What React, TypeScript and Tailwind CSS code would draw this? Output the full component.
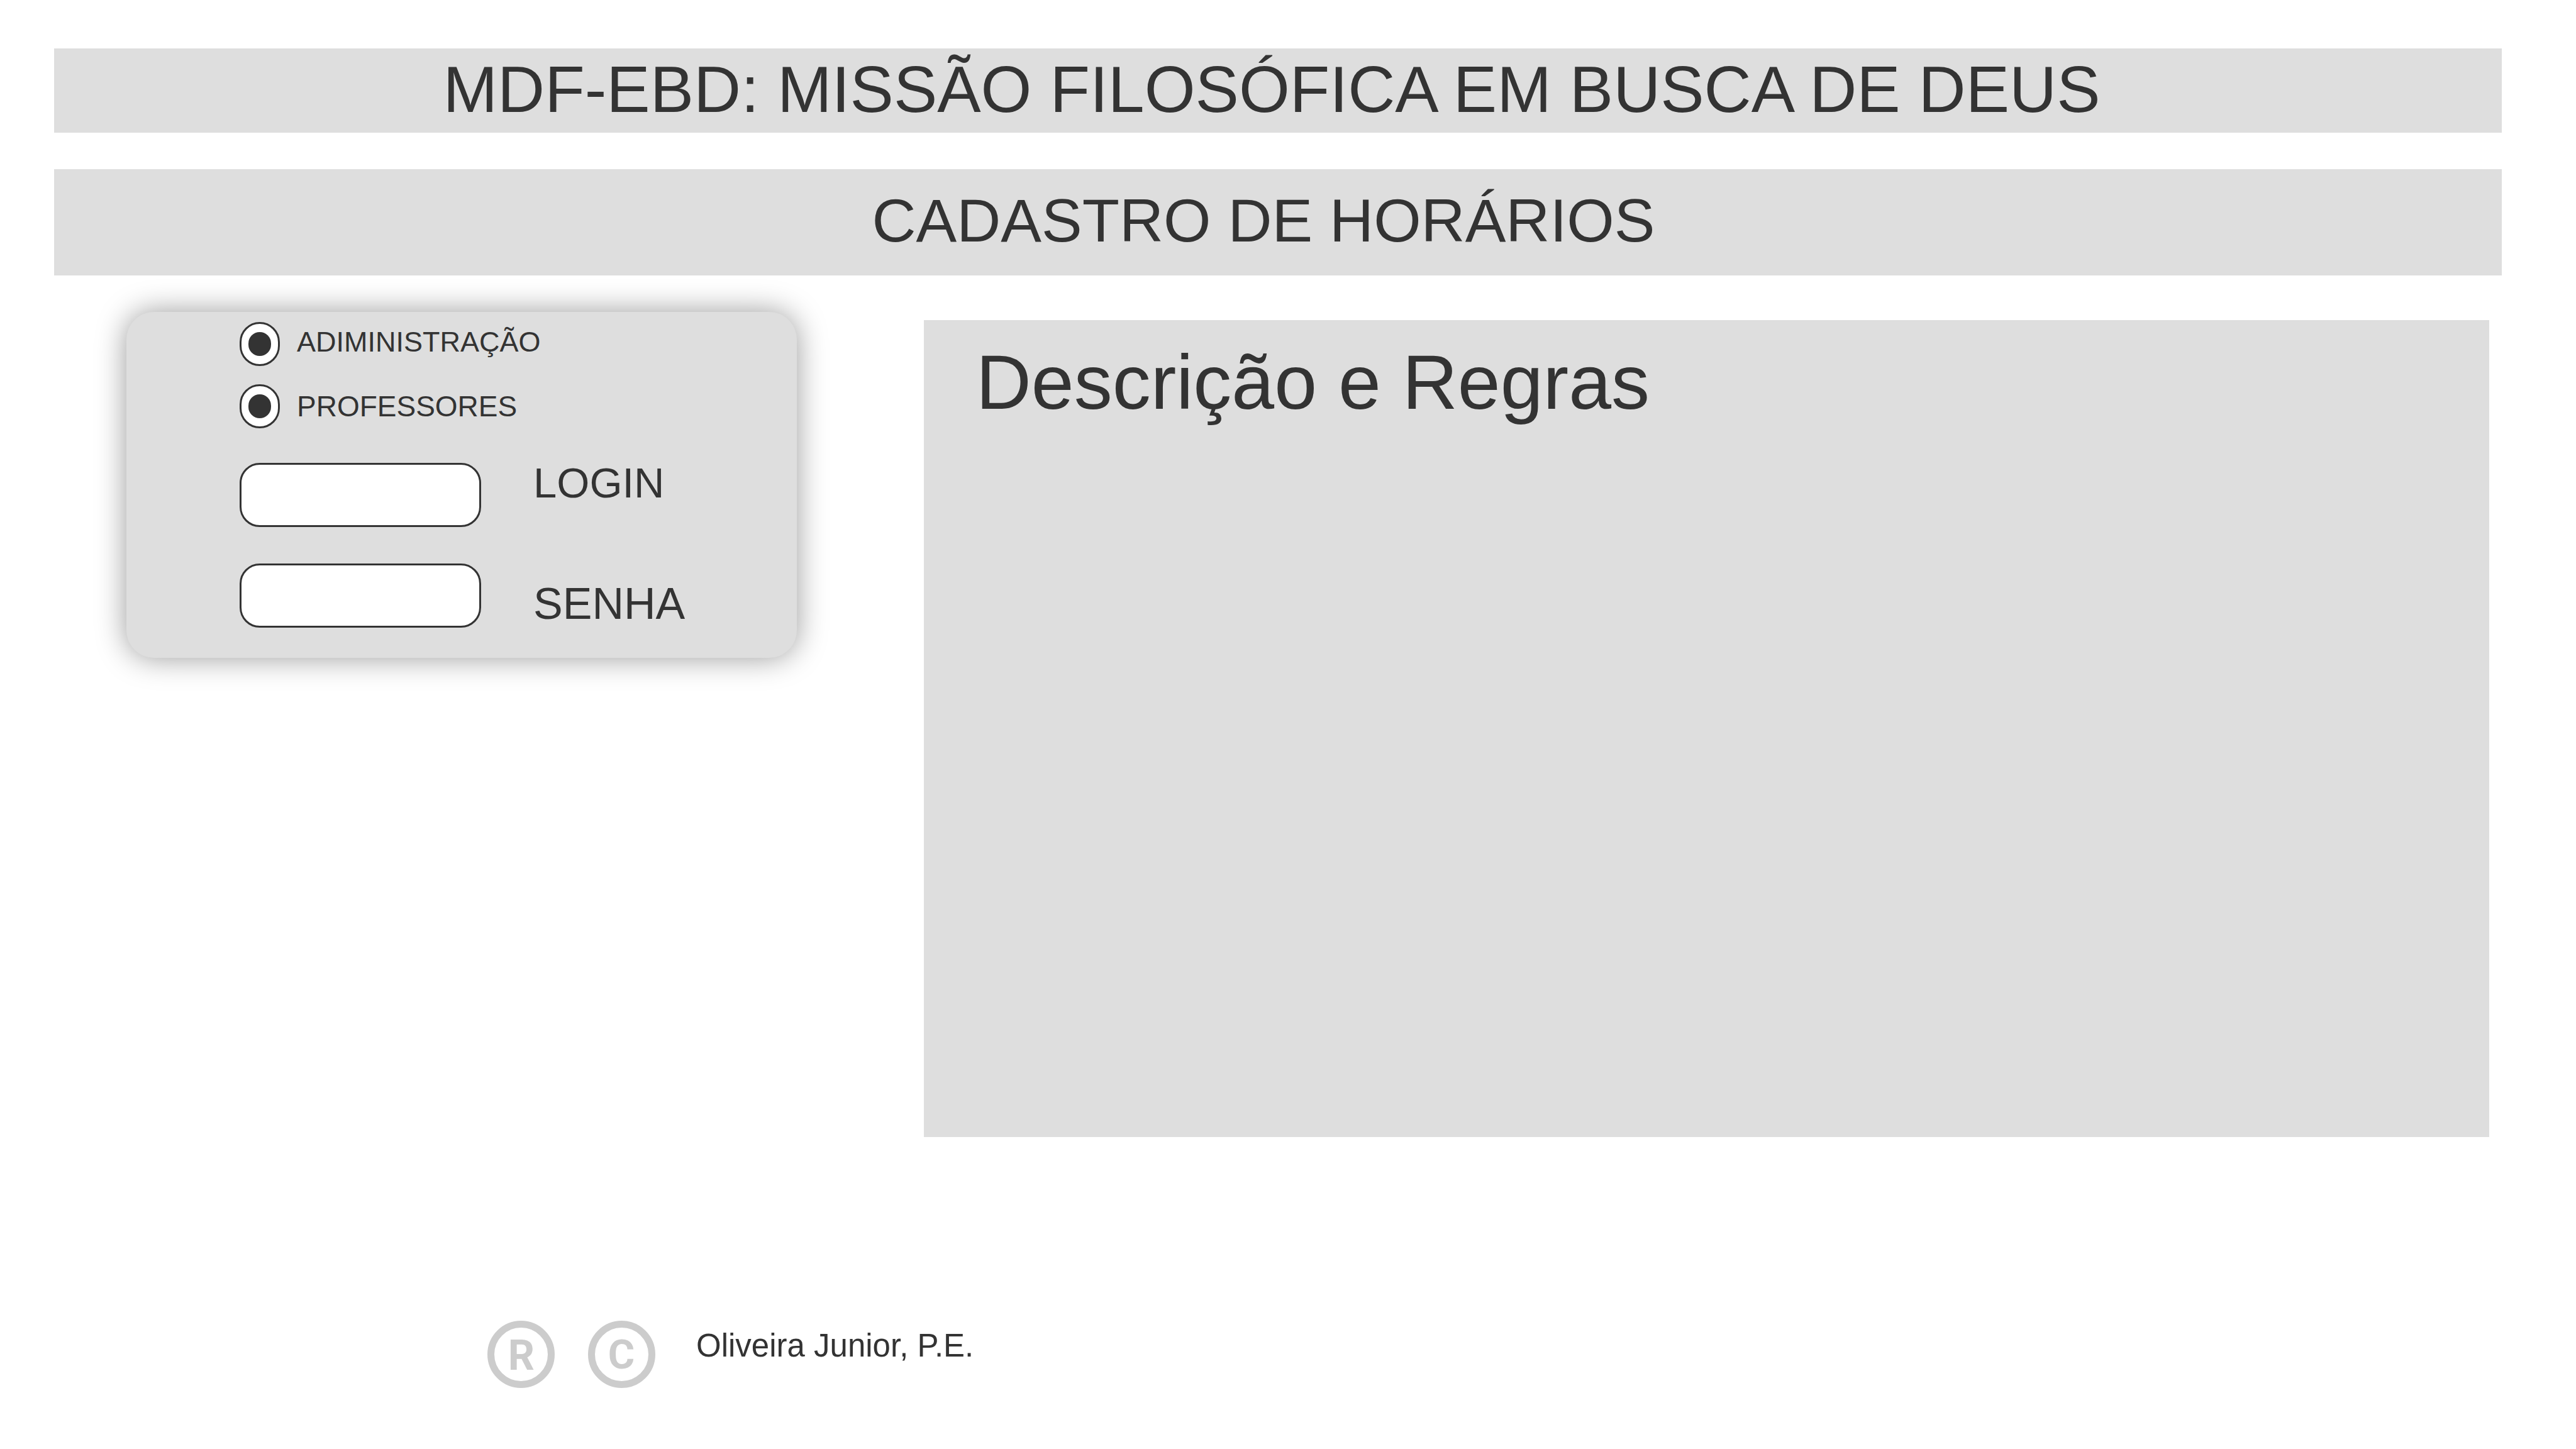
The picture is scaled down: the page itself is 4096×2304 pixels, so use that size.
import React from "react";

type RadioRowProps = { id: string; name: string; label: string; labelClass: string };

function RadioRow({ id, name, label, labelClass }: RadioRowProps) {
  return (
    <div className="flex items-center gap-[27px]">
      <input
        id={id}
        name={name}
        type="radio"
        defaultChecked
        className="grid h-[70px] w-16 shrink-0 appearance-none place-content-center rounded-full border-3 border-[#333333] bg-white checked:before:block checked:before:h-[38px] checked:before:w-[36px] checked:before:rounded-full checked:before:bg-[#333333] checked:before:content-['']"
      />
      <label htmlFor={id} className={labelClass}>
        {label}
      </label>
    </div>
  );
}

const fieldClass =
  "h-[102px] w-96 shrink-0 rounded-[32px] border-3 border-[#333333] bg-white px-6 text-[45px] outline-none";

function Mark({ children }: { children: React.ReactNode }) {
  return (
    <svg viewBox="0 0 107 107" className="size-[107px] shrink-0" fill="#cccccc">
      <circle cx="53.5" cy="53.5" r="48" fill="none" stroke="#cccccc" strokeWidth="11" />
      {children}
    </svg>
  );
}

export default function App() {
  return (
    <div className="flex min-h-screen flex-col bg-white pt-[77px] pb-[97px] font-['Liberation_Sans',Arial,sans-serif] text-[#333333]">
      <header className="flex flex-col gap-[58px] pr-[118px] pl-[86px]">
        <h1 className="flex h-[134px] items-center justify-center bg-[#dedede] pr-5 pb-1 text-[104px] leading-none whitespace-nowrap">
          MDF-EBD: MISSÃO FILOSÓFICA EM BUSCA DE DEUS
        </h1>
        <h2 className="flex h-[169px] items-center justify-center bg-[#dedede] pr-[46px] pb-1.5 text-[97px] leading-none whitespace-nowrap">
          CADASTRO DE HORÁRIOS
        </h2>
      </header>

      <main className="grid grid-cols-[1066fr_2490fr] items-start gap-x-[202px] pt-[58px] pr-[138px] pl-[201px]">
        <form className="rounded-[44px] bg-[#dedede] pt-4 pb-12 pl-[180px] shadow-[0_0_48px_rgba(0,0,0,0.4)]">
          <div className="flex flex-col gap-[29px]">
            <RadioRow
              id="administracao"
              name="administracao"
              label="ADIMINISTRAÇÃO"
              labelClass="pb-2 text-[45px] leading-none"
            />
            <RadioRow
              id="professores"
              name="professores"
              label="PROFESSORES"
              labelClass="text-[46px] leading-none"
            />
          </div>
          <div className="mt-[55px] flex flex-col gap-[58px]">
            <div className="flex items-start gap-[83px]">
              <input id="login" type="text" className={fieldClass} />
              <label htmlFor="login" className="text-[67px] leading-[64px]">
                LOGIN
              </label>
            </div>
            <div className="flex items-end gap-[83px]">
              <input id="senha" type="password" className={fieldClass} />
              <label htmlFor="senha" className="pb-1.5 text-[70px] leading-[64px]">
                SENHA
              </label>
            </div>
          </div>
        </form>

        <section className="mt-[13px] min-h-[1299px] bg-[#dedede] pt-[27px] pl-[83px]">
          <h3 className="text-[122px] leading-[144px]">Descrição e Regras</h3>
        </section>
      </main>

      <footer className="mt-auto flex items-start pl-[775px]">
        <div className="flex gap-[53px]">
          <Mark>
            <text x="54" y="78" textAnchor="middle" className="font-[Roboto,sans-serif] text-[66px] font-bold">
              R
            </text>
          </Mark>
          <Mark>
            <text x="53" y="76" textAnchor="middle" className="font-[Roboto,sans-serif] text-[65px] font-bold">
              C
            </text>
          </Mark>
        </div>
        <p className="ml-[65px] text-[51px] leading-[80px]">Oliveira Junior, P.E.</p>
      </footer>
    </div>
  );
}
